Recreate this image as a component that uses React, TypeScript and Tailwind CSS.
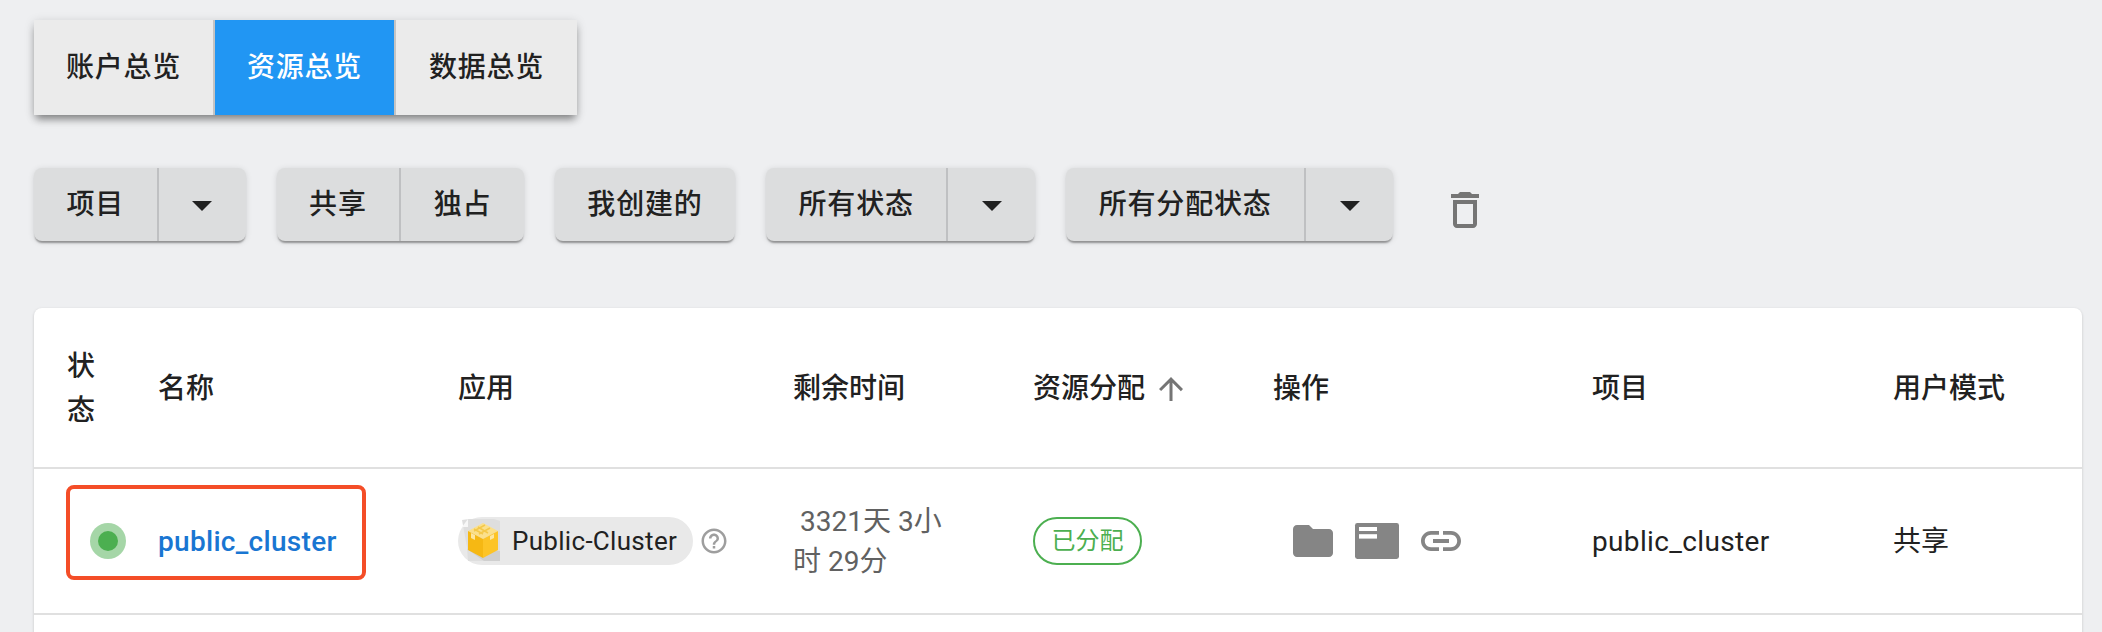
const HELP_PATH =
  'M11 18h2v-2h-2v2zm1-16C6.48 2 2 6.48 2 12s4.48 10 10 10 10-4.48 10-10S17.52 2 12 2zm0 18c-4.41 0-8-3.59-8-8s3.59-8 8-8 8 3.59 8 8-3.59 8-8 8zm0-14c-2.21 0-4 1.79-4 4h2c0-1.1.9-2 2-2s2 .9 2 2c0 2-3 1.75-3 5h2c0-2.25 3-2.5 3-5 0-2.21-1.79-4-4-4z';
const TRASH_PATH =
  'M6 19c0 1.1.9 2 2 2h8c1.1 0 2-.9 2-2V7H6v12zM8 9h8v10H8V9zm7.5-5l-1-1h-5l-1 1H5v2h14V4z';
const FOLDER_PATH =
  'M10 4H4c-1.1 0-1.99.9-1.99 2L2 18c0 1.1.9 2 2 2h16c1.1 0 2-.9 2-2V8c0-1.1-.9-2-2-2h-8l-2-2z';
const LINK_PATH =
  'M3.9 12c0-1.71 1.39-3.1 3.1-3.1h4V7H7c-2.76 0-5 2.24-5 5s2.24 5 5 5h4v-1.9H7c-1.71 0-3.1-1.39-3.1-3.1zM8 13h8v-2H8v2zm9-6h-4v1.9h4c1.71 0 3.1 1.39 3.1 3.1s-1.39 3.1-3.1 3.1h-4V17h4c2.76 0 5-2.24 5-5s-2.24-5-5-5z';
const ARROW_UP_PATH = 'M4 12l1.41 1.41L11 7.83V20h2V7.83l5.58 5.59L20 12l-8-8-8 8z';

const COLUMNS = 'grid grid-cols-[91px_300px_335px_240px_240px_319px_301px_1fr] pl-[33px]';

function Icon({ path, className }: { path: string; className: string }) {
  return (
    <svg viewBox="0 0 24 24" fill="currentColor" className={className}>
      <path d={path} />
    </svg>
  );
}

function TerminalIcon() {
  return (
    <svg viewBox="0 0 24 24" className="h-12 w-12 text-[#858585]">
      <rect x="1" y="3" width="22" height="18" rx="1.2" fill="currentColor" />
      <rect x="3" y="5" width="9" height="2" fill="#fff" />
      <rect x="3" y="8.6" width="9" height="2.2" fill="#fff" />
    </svg>
  );
}

function CubeIcon() {
  return (
    <svg viewBox="0 0 48 48" className="h-12 w-12 shrink-0">
      <path d="M4 3l7-1h25l6 2v40H10L9 30z" fill="#dedede" />
      <path d="M4 10l6-8v8z" fill="#f7f7f7" />
      <path d="M9 32l17 12h16V34z" fill="#cfcfcf" />
      <path d="M25 6l15 8-15 8-15-8z" fill="#fbe08c" />
      <path d="M10 14l15 8v19l-15-8z" fill="#f6b813" />
      <path d="M40 14l-15 8v19l15-8z" fill="#fdc426" />
      <path d="M16 14l11-6M21 17l11-6M20 10l10 6M16 12l9 5" stroke="#f4c84a" strokeWidth="1.5" fill="none" />
      <path d="M13 16v5l4 2v-5zM32 19v4l4-2v-4z" fill="#fde6a0" />
    </svg>
  );
}

function ToolbarSegment({ label, divider }: { label: string; divider?: boolean }) {
  return (
    <div className={`flex items-center px-[32.5px] ${divider ? 'border-r-2 border-[#bfc0c2]' : ''}`}>{label}</div>
  );
}

function DropdownArrow() {
  return (
    <div className="flex w-[87px] items-center justify-center">
      <Icon path="M7 10l5 5 5-5z" className="h-12 w-12 text-[#212121]" />
    </div>
  );
}

function ToolbarGroup({ children }: { children: React.ReactNode }) {
  return (
    <div className="flex h-[73px] rounded-lg bg-[#dcddde] text-[28px] font-medium tracking-[0.8px] text-[#212121] shadow-[0_3px_2px_-1px_rgba(0,0,0,0.35),0_1px_6px_rgba(0,0,0,0.12)]">
      {children}
    </div>
  );
}

function HeaderCell({ children }: { children: React.ReactNode }) {
  return <div className="flex items-center pt-[3px] font-medium text-[#212121]">{children}</div>;
}

export default function App() {
  const tabs = ['账户总览', '资源总览', '数据总览'];

  return (
    <div className="h-[632px] overflow-hidden bg-[#eeeff1] px-[20px] pt-[20px] pl-[34px] font-['Roboto','Noto_Sans_CJK_SC',sans-serif] text-[28px] text-[#212121]">
      <div className="flex w-fit shadow-[0_6px_8px_-2px_rgba(0,0,0,0.4),0_2px_10px_rgba(0,0,0,0.14)]">
        {tabs.map((tab, index) => (
          <div
            key={tab}
            className={`flex h-[95px] w-[181px] items-center justify-center font-medium tracking-[0.8px] ${
              index === 1 ? 'bg-[#2196f3] text-white' : 'bg-[#ebebeb]'
            } ${index < 2 ? 'border-r-2 border-[#c4c4c4]' : ''}`}
          >
            {tab}
          </div>
        ))}
      </div>

      <div className="mt-[53px] flex items-center gap-[31px]">
        <ToolbarGroup>
          <ToolbarSegment label="项目" divider />
          <DropdownArrow />
        </ToolbarGroup>
        <ToolbarGroup>
          <ToolbarSegment label="共享" divider />
          <ToolbarSegment label="独占" />
        </ToolbarGroup>
        <ToolbarGroup>
          <ToolbarSegment label="我创建的" />
        </ToolbarGroup>
        <ToolbarGroup>
          <ToolbarSegment label="所有状态" divider />
          <DropdownArrow />
        </ToolbarGroup>
        <ToolbarGroup>
          <ToolbarSegment label="所有分配状态" divider />
          <DropdownArrow />
        </ToolbarGroup>
        <Icon path={TRASH_PATH} className="mt-[10px] ml-[17px] h-12 w-12 text-[#757575]" />
      </div>

      <div className="mt-[67px] h-[400px] rounded-lg bg-white shadow-[0_1px_3px_rgba(0,0,0,0.18)]">
        <div className={`${COLUMNS} h-[161px] border-b-2 border-[#e0e0e0]`}>
          <HeaderCell>
            <span className="w-[28px] leading-[44px]">状态</span>
          </HeaderCell>
          <HeaderCell>名称</HeaderCell>
          <HeaderCell>应用</HeaderCell>
          <HeaderCell>剩余时间</HeaderCell>
          <HeaderCell>
            资源分配
            <Icon path={ARROW_UP_PATH} className="ml-[8px] h-9 w-9 text-[#757575]" />
          </HeaderCell>
          <HeaderCell>操作</HeaderCell>
          <HeaderCell>项目</HeaderCell>
          <HeaderCell>用户模式</HeaderCell>
        </div>

        <div className={`${COLUMNS} relative h-[146px] items-center border-b-2 border-[#e0e0e0]`}>
          <div className="ml-[23px] flex h-9 w-[36px] items-center justify-center rounded-full bg-[#a5d6a7]">
            <div className="h-5 w-5 rounded-full bg-[#4caf50]" />
          </div>
          <a className="pt-[2px] font-medium tracking-[0.3px] text-[#1976d2]">public_cluster</a>
          <div className="flex items-center">
            <div className="flex h-12 w-[235px] items-center rounded-full bg-[#e9e9e9] text-[26px] tracking-[0.3px]">
              <CubeIcon />
              <span className="ml-[6px]">Public-Cluster</span>
            </div>
            <Icon path={HELP_PATH} className="ml-[6px] h-[30px] w-[30px] text-[#9e9e9e]" />
          </div>
          <div className="w-[165px] pt-[2px] leading-[40px] text-[#616161]">
            <span className="ml-[7px]">3321天 3小时 29分</span>
          </div>
          <div>
            <span className="flex h-12 w-[109px] items-center justify-center rounded-full border-2 border-[#4caf50] text-[24px] text-[#4caf50]">
              已分配
            </span>
          </div>
          <div className="flex items-center gap-4 pl-[16px] text-[#858585]">
            <Icon path={FOLDER_PATH} className="h-12 w-12" />
            <TerminalIcon />
            <Icon path={LINK_PATH} className="h-12 w-12" />
          </div>
          <div className="pt-[2px] tracking-[0.35px]">public_cluster</div>
          <div className="pt-[2px]">共享</div>
          <div className="absolute top-[16px] left-[32px] h-[95px] w-[300px] rounded-lg border-4 border-[#f44d27]" />
        </div>
      </div>
    </div>
  );
}
